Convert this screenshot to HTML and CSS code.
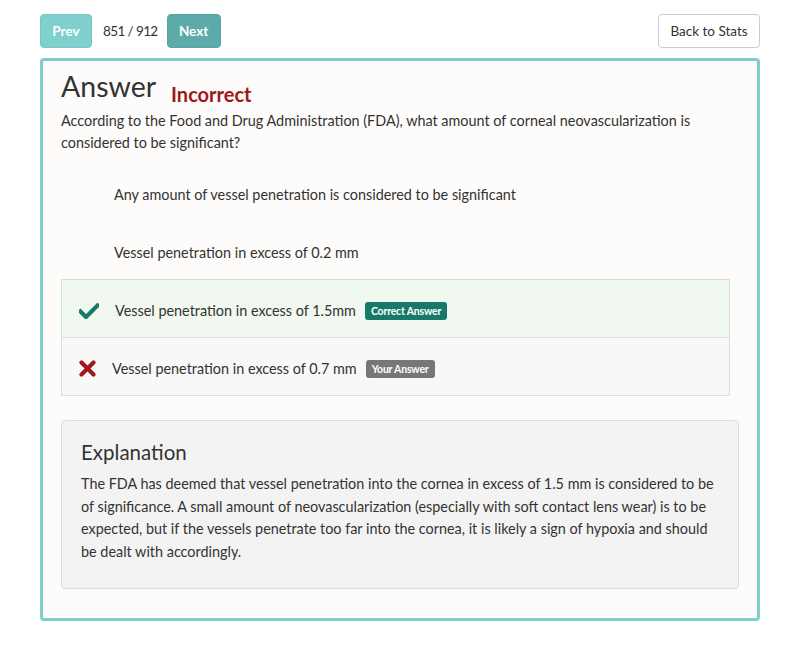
FILE: index.html
```html
<!DOCTYPE html>
<html>
<head>
<meta charset="utf-8">
<link rel="stylesheet" href="styles.css">
</head>
<body>
<div class="page">
  <div class="topbar">
    <div class="nav">
      <button class="btn btn-prev">Prev</button>
      <span class="counter">851 / 912</span>
      <button class="btn btn-next">Next</button>
    </div>
    <button class="btn btn-back">Back to Stats</button>
  </div>
  <div class="panel">
    <div class="title-row">
      <h1 class="title">Answer</h1>
      <span class="status">Incorrect</span>
    </div>
    <p class="question">According to the Food and Drug Administration (FDA), what amount of corneal neovascularization is considered to be significant?</p>
    <ul class="options">
      <li class="option"><span class="icon-slot"></span><span class="opt-text">Any amount of vessel penetration is considered to be significant</span></li>
      <li class="option"><span class="icon-slot"></span><span class="opt-text">Vessel penetration in excess of 0.2 mm</span></li>
      <li class="option option-correct">
        <svg class="icon icon-check" viewBox="0 0 20 16" width="20" height="16"><path d="M1.5 8.5 L7 14 L18.5 2.5" fill="none" stroke="#177a68" stroke-width="4.2" stroke-linecap="square"/></svg>
        <span class="opt-text">Vessel penetration in excess of 1.5mm</span>
        <span class="badge badge-correct">Correct Answer</span>
      </li>
      <li class="option option-wrong">
        <svg class="icon icon-x" viewBox="0 0 17 17" width="17" height="17"><path d="M2.5 2.5 L14.5 14.5 M14.5 2.5 L2.5 14.5" fill="none" stroke="#a0171b" stroke-width="4.2" stroke-linecap="round"/></svg>
        <span class="opt-text">Vessel penetration in excess of 0.7 mm</span>
        <span class="badge badge-yours">Your Answer</span>
      </li>
    </ul>
    <div class="explanation">
      <h2 class="exp-title">Explanation</h2>
      <p class="exp-text">The FDA has deemed that vessel penetration into the cornea in excess of 1.5 mm is considered to be of significance. A small amount of neovascularization (especially with soft contact lens wear) is to be expected, but if the vessels penetrate too far into the cornea, it is likely a sign of hypoxia and should be dealt with accordingly.</p>
    </div>
  </div>
</div>
</body>
</html>
```

FILE: styles.css
```css
html, body {
  margin: 0;
  padding: 0;
  background: #ffffff;
}
body {
  font-family: Lato, "Open Sans", sans-serif;
  color: #333333;
  font-size: 14.4px;
}
.page {
  padding: 14px 40px 0 40px;
  width: 720px;
}
.topbar {
  display: flex;
  justify-content: space-between;
  align-items: center;
  height: 34px;
}
.nav {
  display: flex;
  align-items: center;
}
.btn {
  font-family: Lato, "Open Sans", sans-serif;
  height: 34px;
  border-radius: 4px;
  font-size: 13.5px;
  cursor: pointer;
  white-space: nowrap;
}
.btn-prev, .btn-next {
  border: 1px solid transparent;
  color: #ffffff;
  font-weight: 700;
  padding: 0;
}
.btn-prev {
  background: #80d0cd;
  border-color: #79c7c4;
  width: 52px;
}
.btn-next {
  background: #5cabaa;
  border-color: #58a4a3;
  width: 54px;
}
.counter {
  font-size: 13.5px;
  letter-spacing: -0.6px;
  color: #333;
  margin: 0 9px 0 11px;
}
.btn-back {
  background: #ffffff;
  border: 1px solid #cccccc;
  color: #333333;
  padding: 0;
  width: 102px;
}
.panel {
  margin-top: 10px;
  border: 3px solid #7ccfcc;
  border-radius: 4px;
  background: #fdfcfa;
  padding: 6px 18px 29px 18px;
}
.title-row {
  display: flex;
  align-items: baseline;
}
.title {
  font-size: 28.5px;
  font-weight: 400;
  margin: 0;
  line-height: 38px;
  color: #333;
}
.status {
  margin-left: 15px;
  color: #a0171b;
  font-weight: 700;
  font-size: 20px;
  position: relative;
  top: 5px;
}
.question {
  margin: 5px 0 0 0;
  line-height: 22px;
  font-size: 14.4px;
}
.options {
  list-style: none;
  margin: 9px 9px 0 0;
  padding: 0;
}
.option {
  box-sizing: border-box;
  display: flex;
  align-items: center;
  height: 59px;
  padding: 4px 0 0 17px;
  border: 1px solid transparent;
  margin-bottom: -1px;
}
.icon-slot {
  display: inline-block;
  width: 35px;
}
.icon {
  flex: none;
  margin-right: 16px;
}
.option-correct {
  background: #f0f8ef;
  border-color: #cfe6c9;
}
.option-wrong {
  background: #f8f8f8;
  border-color: #dddddd;
}
.opt-text {
  font-size: 14.4px;
}
.badge {
  margin-left: 9px;
  color: #ffffff;
  font-weight: 700;
  font-size: 10.5px;
  padding: 3px 6px;
  border-radius: 3px;
  line-height: 12px;
  letter-spacing: -0.2px;
}
.badge-correct {
  background: #177a68;
}
.badge-yours {
  background: #777777;
}
.explanation {
  margin-top: 25px;
  background: #f3f3f3;
  border: 1px solid #dddddd;
  border-radius: 4px;
  padding: 16px 19px 24px 19px;
}
.exp-title {
  margin: 0 0 6px 0;
  font-size: 20.5px;
  font-weight: 400;
  line-height: 30px;
}
.exp-text {
  margin: 0;
  line-height: 22.7px;
  font-size: 14.4px;
}
```
